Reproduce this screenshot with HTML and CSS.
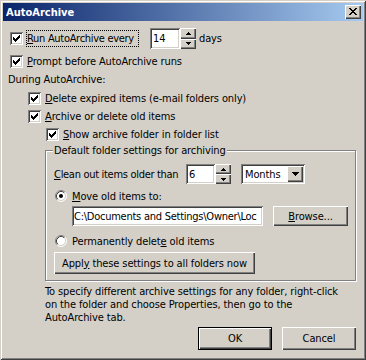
FILE: index.html
```html
<!DOCTYPE html>
<html>
<head>
<meta charset="utf-8">
<link rel="stylesheet" href="styles.css">
</head>
<body>
<div class="window">
  <div class="titlebar">
    <span class="title">AutoArchive</span>
    <span class="close raised"><svg width="8" height="7" viewBox="0 0 8 7"><path d="M0 0h2v1H0z M6 0h2v1H6z M1 1h2v1H1z M5 1h2v1H5z M2 2h4v1H2z M3 3h2v1H3z M2 4h4v1H2z M1 5h2v1H1z M5 5h2v1H5z M0 6h2v1H0z M6 6h2v1H6z" fill="#000"/></svg></span>
  </div>
  <div class="content">
    <div class="row r-run">
      <span class="check"><svg width="13" height="13" viewBox="0 0 13 13"><path d="M3 5h1v3H3z M4 6h1v3H4z M5 7h1v3H5z M6 6h1v3H6z M7 5h1v3H7z M8 4h1v3H8z M9 3h1v3H9z" fill="#000"/></svg></span>
      <span class="focus"><u>R</u>un AutoArchive every</span>
      <span class="edit days-edit">14</span>
      <span class="spin spin-tall">
        <span class="spin-btn raised"><svg width="5" height="3" viewBox="0 0 5 3"><path d="M2 0h1v1h1v1h1v1H0V2h1V1h1z" fill="#000"/></svg></span>
        <span class="spin-btn raised"><svg width="5" height="3" viewBox="0 0 5 3"><path d="M0 0h5v1H4v1H3v1H2V2H1V1H0z" fill="#000"/></svg></span>
      </span>
      <span class="unit">days</span>
    </div>
    <div class="row r-opt">
      <span class="check"><svg width="13" height="13" viewBox="0 0 13 13"><path d="M3 5h1v3H3z M4 6h1v3H4z M5 7h1v3H5z M6 6h1v3H6z M7 5h1v3H7z M8 4h1v3H8z M9 3h1v3H9z" fill="#000"/></svg></span>
      <span class="opt-label"><u>P</u>rompt before AutoArchive runs</span>
    </div>
    <div class="section-label">During AutoArchive:</div>
    <div class="row r-opt indent1">
      <span class="check"><svg width="13" height="13" viewBox="0 0 13 13"><path d="M3 5h1v3H3z M4 6h1v3H4z M5 7h1v3H5z M6 6h1v3H6z M7 5h1v3H7z M8 4h1v3H8z M9 3h1v3H9z" fill="#000"/></svg></span>
      <span class="opt-label"><u>D</u>elete expired items (e-mail folders only)</span>
    </div>
    <div class="row r-opt indent1">
      <span class="check"><svg width="13" height="13" viewBox="0 0 13 13"><path d="M3 5h1v3H3z M4 6h1v3H4z M5 7h1v3H5z M6 6h1v3H6z M7 5h1v3H7z M8 4h1v3H8z M9 3h1v3H9z" fill="#000"/></svg></span>
      <span class="opt-label"><u>A</u>rchive or delete old items</span>
    </div>
    <div class="row r-opt indent2">
      <span class="check"><svg width="13" height="13" viewBox="0 0 13 13"><path d="M3 5h1v3H3z M4 6h1v3H4z M5 7h1v3H5z M6 6h1v3H6z M7 5h1v3H7z M8 4h1v3H8z M9 3h1v3H9z" fill="#000"/></svg></span>
      <span class="opt-label"><u>S</u>how archive folder in folder list</span>
    </div>
    <div class="group">
      <div class="group-title">Default folder settings for archiving</div>
      <div class="row r-clean">
        <span class="clean-label"><u>C</u>lean out items older than</span>
        <span class="edit age-edit">6</span>
        <span class="spin">
          <span class="spin-btn raised"><svg width="5" height="3" viewBox="0 0 5 3"><path d="M2 0h1v1h1v1h1v1H0V2h1V1h1z" fill="#000"/></svg></span>
          <span class="spin-btn raised"><svg width="5" height="3" viewBox="0 0 5 3"><path d="M0 0h5v1H4v1H3v1H2V2H1V1H0z" fill="#000"/></svg></span>
        </span>
        <span class="combo">
          <span class="combo-text">Months</span>
          <span class="combo-btn raised"><svg width="7" height="4" viewBox="0 0 7 4"><path d="M0 0h7v1H6v1H5v1H4v1H3V3H2V2H1V1H0z" fill="#000"/></svg></span>
        </span>
      </div>
      <div class="row r-radio">
        <span class="radio"><svg width="12" height="12" viewBox="0 0 12 12"><circle cx="6" cy="6" r="5" fill="#fff"/><path d="M2.11 9.89A5.5 5.5 0 0 1 9.89 2.11" fill="none" stroke="#808080"/><path d="M9.89 2.11A5.5 5.5 0 0 1 2.11 9.89" fill="none" stroke="#fff"/><path d="M2.82 9.18A4.5 4.5 0 0 1 9.18 2.82" fill="none" stroke="#404040"/><path d="M9.18 2.82A4.5 4.5 0 0 1 2.82 9.18" fill="none" stroke="#d4d0c8"/><circle cx="6" cy="6" r="2" fill="#000"/></svg></span>
        <span class="opt-label"><u>M</u>ove old items to:</span>
      </div>
      <div class="row r-path">
        <span class="edit path-edit"><span class="path-text">C:\Documents and Settings\Owner\Loc</span></span>
        <span class="btn raised browse"><span><u>B</u>rowse...</span></span>
      </div>
      <div class="row r-radio r-perm">
        <span class="radio"><svg width="12" height="12" viewBox="0 0 12 12"><circle cx="6" cy="6" r="5" fill="#fff"/><path d="M2.11 9.89A5.5 5.5 0 0 1 9.89 2.11" fill="none" stroke="#808080"/><path d="M9.89 2.11A5.5 5.5 0 0 1 2.11 9.89" fill="none" stroke="#fff"/><path d="M2.82 9.18A4.5 4.5 0 0 1 9.18 2.82" fill="none" stroke="#404040"/><path d="M9.18 2.82A4.5 4.5 0 0 1 2.82 9.18" fill="none" stroke="#d4d0c8"/></svg></span>
        <span class="opt-label">Permanently delet<u>e</u> old items</span>
      </div>
      <div class="row r-apply">
        <span class="btn raised apply"><span>Appl<u>y</u> these settings to all folders now</span></span>
      </div>
    </div>
    <p class="note">To specify different archive settings for any folder, right-click<br>on the folder and choose Properties, then go to the<br>AutoArchive tab.</p>
    <div class="actions">
      <span class="btn default">OK</span>
      <span class="btn raised">Cancel</span>
    </div>
  </div>
</div>
</body>
</html>
```

FILE: styles.css
```css
* { box-sizing: border-box; margin: 0; padding: 0; }
html, body { background: #d4d0c8; }
body {
  margin: 0;
  font-family: "DejaVu Sans Condensed", "DejaVu Sans", sans-serif;
  font-size: 11px;
  letter-spacing: -0.12px;
  color: #000;
}
u { text-decoration: underline; text-underline-offset: 1px; }

.window {
  width: 366px;
  height: 360px;
  padding: 3px;
  background: #d4d0c8;
  box-shadow: inset 1px 1px 0 #d4d0c8, inset -1px -1px 0 #404040, inset 2px 2px 0 #fff, inset -2px -2px 0 #808080;
}

.raised {
  background: #d4d0c8;
  box-shadow: inset 1px 1px 0 #fff, inset -1px -1px 0 #404040, inset -2px -2px 0 #808080;
}

.titlebar {
  height: 18px;
  display: flex;
  align-items: center;
  justify-content: space-between;
  padding: 0 2px 0 3px;
  background: linear-gradient(to right, #0a246a, #a6caf0);
}
.title { color: #fff; font-weight: bold; font-size: 11px; line-height: 13px; letter-spacing: 0; }
.close {
  width: 16px; height: 14px;
  display: flex; align-items: center; justify-content: center;
  padding-bottom: 1px; padding-right: 1px;
}
.close svg { display: block; }

.content { padding-top: 7px; }

.row { display: flex; align-items: center; }

.check {
  width: 13px; height: 13px; flex: none;
  background: #fff;
  box-shadow: inset 1px 1px 0 #808080, inset -1px -1px 0 #fff, inset 2px 2px 0 #404040, inset -2px -2px 0 #d4d0c8;
}
.check svg { display: block; }

.edit {
  background: #fff;
  box-shadow: inset 1px 1px 0 #808080, inset -1px -1px 0 #fff, inset 2px 2px 0 #404040, inset -2px -2px 0 #d4d0c8;
  white-space: nowrap;
  overflow: hidden;
  display: flex;
  align-items: center;
}

.r-run { height: 21px; padding-left: 7px; }
.focus {
  margin-left: 3px;
  width: 113px; height: 17px;
  border: 1px dotted #000;
  line-height: 15px;
  white-space: nowrap;
  letter-spacing: -0.3px;
}
.days-edit { margin-left: 11px; width: 30px; height: 21px; padding-left: 3px; }
.spin { display: flex; flex-direction: column; width: 16px; height: 20px; flex: none; }
.spin-tall { height: 21px; }
.spin-btn { flex: 1; display: flex; align-items: center; justify-content: center; }
.spin-btn svg { display: block; }
.unit { margin-left: 3px; }

.r-opt { height: 18px; padding-left: 7px; }
.r-run + .r-opt { margin-top: 3px; }
.opt-label { margin-left: 4px; white-space: nowrap; }
.section-label { height: 19px; line-height: 19px; padding-left: 5px; }
.indent1 { padding-left: 25px; }
.indent2 { padding-left: 43px; }

.group {
  margin: 7px 0 0 42px;
  width: 311px;
  border: 1px solid #808080;
  box-shadow: 1px 1px 0 #fff, inset 1px 1px 0 #fff;
  padding: 0 0 6px 8px;
}
.group-title {
  margin: -7px 0 0 -1px;
  width: max-content;
  padding: 0 1px;
  line-height: 13px;
  background: #d4d0c8;
}

.r-clean { margin-top: 7px; height: 20px; }
.clean-label { width: 132px; white-space: nowrap; letter-spacing: -0.3px; }
.age-edit { width: 29px; height: 20px; padding-left: 3px; }
.combo {
  margin-left: 10px;
  width: 64px; height: 20px;
  display: flex; align-items: center; justify-content: space-between;
  padding: 2px;
  background: #fff;
  box-shadow: inset 1px 1px 0 #808080, inset -1px -1px 0 #fff, inset 2px 2px 0 #404040, inset -2px -2px 0 #d4d0c8;
}
.combo-text { padding-left: 2px; }
.combo-btn { width: 16px; height: 16px; display: flex; align-items: center; justify-content: center; }
.combo-btn svg { display: block; }

.r-radio { height: 16px; margin-top: 4px; }
.radio { width: 12px; height: 12px; margin-left: 1px; flex: none; }
.radio svg { display: block; }
.r-radio .opt-label { margin-left: 5px; }
.r-perm { margin-top: 7px; }

.r-path { margin-top: 2px; height: 20px; }
.path-edit { margin-left: 18px; width: 191px; height: 20px; padding-left: 2px; }
.path-text { display: block; overflow: hidden; width: 187px; letter-spacing: -0.25px; }

.btn {
  display: flex; align-items: center; justify-content: center;
  white-space: nowrap;
}
.browse { margin-left: 10px; width: 75px; height: 20px; }
.r-apply { margin-top: 3px; }
.apply { width: 201px; height: 22px; }

.note {
  margin: 4px 0 0 42px;
  line-height: 13px;
  white-space: nowrap;
}

.actions {
  margin-top: 3px;
  display: flex;
  justify-content: flex-end;
  gap: 10px;
  padding-right: 7px;
}
.actions .btn { width: 74px; height: 23px; }
.default {
  border: 1px solid #000;
  box-shadow: inset 1px 1px 0 #fff, inset -1px -1px 0 #404040, inset -2px -2px 0 #808080;
  background: #d4d0c8;
}
```
